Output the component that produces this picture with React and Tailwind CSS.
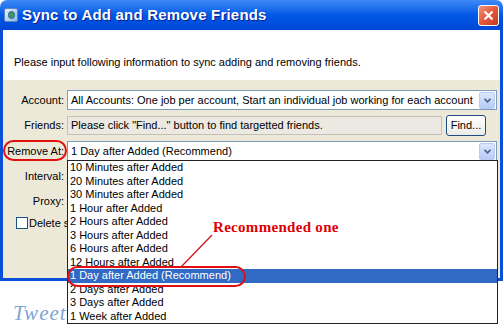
import React from "react";

function Chevron() {
  return (
    <svg width="7" height="5" viewBox="0 0 7 5">
      <path d="M0.5 0.8 L3.5 3.8 L6.5 0.8" stroke="#4D6185" strokeWidth="1.6" fill="none" />
    </svg>
  );
}

function DropBtn() {
  return (
    <div className="w-[16px] h-[17px] mr-[1px] rounded-[2px] border border-[#B9CBF3] bg-gradient-to-b from-[#DCE6FD] to-[#B7CBF7] flex items-center justify-center">
      <Chevron />
    </div>
  );
}

function Select({ text }) {
  return (
    <div className="flex-1 h-[20px] bg-white border border-[#7F9DB9] flex items-center justify-between pl-[3px]">
      <span className="whitespace-nowrap">{text}</span>
      <DropBtn />
    </div>
  );
}

const items = [
  "10 Minutes after Added",
  "20 Minutes after Added",
  "30 Minutes after Added",
  "1 Hour after Added",
  "2 Hours after Added",
  "3 Hours after Added",
  "6 Hours after Added",
  "12 Hours after Added",
  "1 Day after Added (Recommend)",
  "2 Days after Added",
  "3 Days after Added",
  "1 Week after Added",
];

export default function App() {
  return (
    <div
      className="relative w-[503px] h-[325px] overflow-hidden bg-white text-[11px] text-black"
      style={{ fontFamily: '"Liberation Sans", Arial, sans-serif' }}
    >
      {/* Window */}
      <div className="w-[503px] h-[281px] flex flex-col">
        {/* Title bar */}
        <div className="h-[30px] rounded-t-[7px] bg-gradient-to-b from-[#3D8AF7] via-[#0058E6] to-[#0047D6] flex items-center pl-[4px] pr-[4px]">
          <div className="w-[14px] h-[14px] rounded-[2px] bg-gradient-to-br from-[#E6F2FF] to-[#8DB7E8] border border-[#5E87C2] flex items-center justify-center">
            <div className="w-[7px] h-[8px] rounded-full bg-[#3F9A4C] border border-[#2A62B0]" />
          </div>
          <span
            className="ml-[4px] text-white font-bold text-[15px] tracking-[0.2px]"
            style={{ textShadow: "1px 1px 0 #0A1E8C" }}
          >
            Sync to Add and Remove Friends
          </span>
          <div className="ml-auto w-[21px] h-[21px] rounded-[3px] border border-white bg-gradient-to-br from-[#F0937A] via-[#E3583A] to-[#C8391F] flex items-center justify-center">
            <svg width="11" height="11" viewBox="0 0 11 11">
              <path d="M1.5 1.5 L9.5 9.5 M9.5 1.5 L1.5 9.5" stroke="white" strokeWidth="2.2" />
            </svg>
          </div>
        </div>
        {/* Body */}
        <div className="flex-1 flex flex-col border-x-[3px] border-b-[3px] border-[#0A4FD8] bg-[#ECE9D8]">
          <div className="h-[50px] bg-white flex items-center pl-[11px] pt-[14px]">
            Please input following information to sync adding and removing friends.
          </div>
          <div className="flex flex-col pt-[10px] pr-[3px] gap-[5px]">
            <div className="flex items-center">
              <div className="w-[64px] text-right pr-[3px]">Account:</div>
              <Select text="All Accounts: One job per account, Start an individual job working for each account" />
            </div>
            <div className="flex items-center">
              <div className="w-[64px] text-right pr-[3px]">Friends:</div>
              <div className="w-[375px] h-[19px] bg-[#EBE9E1] border border-[#C3C1B5] flex items-center pl-[3px] whitespace-nowrap">
                Please click "Find..." button to find targetted friends.
              </div>
              <div className="ml-[4px] w-[40px] h-[21px] rounded-[3px] border border-[#1F4B80] bg-gradient-to-b from-white to-[#ECEBE6] flex items-center justify-center">
                Find...
              </div>
            </div>
            <div className="flex items-center">
              <div className="w-[64px] text-right pr-[3px]">Remove At:</div>
              <Select text="1 Day after Added (Recommend)" />
            </div>
            <div className="flex items-center h-[20px]">
              <div className="w-[64px] text-right pr-[3px]">Interval:</div>
            </div>
            <div className="flex items-center h-[20px]">
              <div className="w-[64px] text-right pr-[3px]">Proxy:</div>
            </div>
            <div className="flex items-center h-[12px] pl-[13px] mt-[1px]">
              <div className="w-[12px] h-[12px] bg-white border border-[#1C5180] mr-[1px]" />
              <span>Delete s</span>
            </div>
          </div>
        </div>
      </div>

      {/* Below window */}
      <div
        className="absolute left-[13px] top-[298px] whitespace-nowrap text-[21px] italic text-[#7EA4D2] tracking-[1px]"
        style={{ fontFamily: '"Liberation Serif", "Times New Roman", serif' }}
      >
        Tweet
      </div>

      {/* Dropdown list popup */}
      <div className="absolute left-[67px] top-[160px] w-[431px] h-[164px] bg-white border border-[#222] flex flex-col">
        {items.map((t, i) => (
          <div
            key={t}
            className={
              "h-[13.5px] leading-[13.5px] pl-[2px] whitespace-nowrap " +
              (i === 8 ? "bg-[#316AC5] text-white" : "")
            }
          >
            {t}
          </div>
        ))}
      </div>

      {/* Annotations */}
      <div className="absolute left-[3px] top-[140px] w-[64px] h-[21px] rounded-full border-2 border-[#E01010]" />
      <div className="absolute left-[67px] top-[266px] w-[179px] h-[21px] rounded-full border-2 border-[#E01010]" />
      <svg className="absolute left-0 top-0" width="503" height="325">
        <line x1="212" y1="235" x2="181" y2="267" stroke="#D01010" strokeWidth="1.2" />
      </svg>
      <div
        className="absolute left-[213px] top-[216px] text-[15px] font-bold text-[#E00000] tracking-[0.3px]"
        style={{ fontFamily: '"Liberation Serif", "Times New Roman", serif' }}
      >
        Recommended one
      </div>
    </div>
  );
}
